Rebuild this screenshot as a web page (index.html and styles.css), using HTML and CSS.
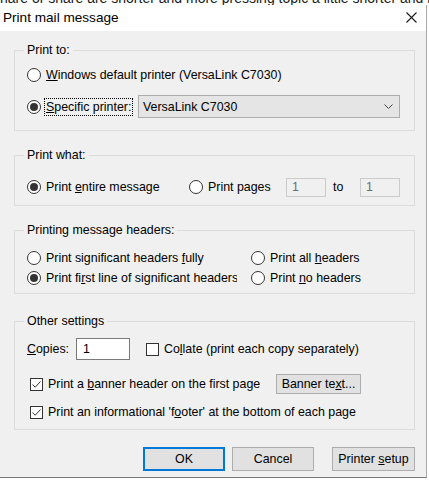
FILE: index.html
```html
<!DOCTYPE html>
<html lang="en">
<head>
  <meta charset="UTF-8">
  <title>Print mail message</title>
  <link rel="stylesheet" href="styles.css">
</head>
<body>
  <!-- Strip of the window behind the dialog -->
  <div class="backdrop">
    <p>hare or share are shorter and more pressing topic a little shorter and more pressing topic</p>
  </div>

  <div class="dialog">
    <div class="titlebar">
      <span class="title">Print mail message</span>
      <svg class="close" width="11" height="11" viewBox="0 0 11 11">
        <path d="M0.5 0.5 L10.5 10.5 M10.5 0.5 L0.5 10.5" stroke="#1a1a1a" stroke-width="1.1" fill="none"/>
      </svg>
    </div>

    <div class="content">
      <!-- Print to -->
      <fieldset class="group group-to">
        <legend>Print to:</legend>
        <div class="row row-default">
          <label class="option"><span class="radio"></span><span><u>W</u>indows default printer (VersaLink C7030)</span></label>
        </div>
        <div class="row row-specific">
          <label class="option opt-specific"><span class="radio checked"></span><span class="focus"><u>S</u>pecific printer:</span></label>
          <div class="select">
            <span>VersaLink C7030</span>
            <svg width="9" height="5" viewBox="0 0 9 5"><path d="M0.5 0.5 L4.5 4.5 L8.5 0.5" stroke="#444" fill="none"/></svg>
          </div>
        </div>
      </fieldset>

      <!-- Print what -->
      <fieldset class="group group-what">
        <legend>Print what:</legend>
        <div class="row row-what">
          <label class="option opt-entire"><span class="radio checked"></span><span>Print <u>e</u>ntire message</span></label>
          <label class="option opt-pages"><span class="radio"></span><span>Print pa<u>g</u>es</span></label>
          <span class="field disabled">1</span>
          <span class="to">to</span>
          <span class="field disabled">1</span>
        </div>
      </fieldset>

      <!-- Headers -->
      <fieldset class="group group-headers">
        <legend>Printing message headers:</legend>
        <div class="row row-headers-1">
          <label class="option col-first"><span class="radio"></span><span>Print significant headers <u>f</u>ully</span></label>
          <label class="option"><span class="radio"></span><span>Print all <u>h</u>eaders</span></label>
        </div>
        <div class="row">
          <label class="option col-first"><span class="radio checked"></span><span>Print fi<u>r</u>st line of significant headers</span></label>
          <label class="option"><span class="radio"></span><span>Print <u>n</u>o headers</span></label>
        </div>
      </fieldset>

      <!-- Other settings -->
      <fieldset class="group group-other">
        <legend>Other settings</legend>
        <div class="row row-copies">
          <span class="copies-label"><u>C</u>opies:</span>
          <span class="field copies">1</span>
          <label class="option opt-collate"><span class="check"></span><span>Co<u>l</u>late (print each copy separately)</span></label>
        </div>
        <div class="row row-banner">
          <label class="option opt-banner">
            <span class="check"><svg width="11" height="11" viewBox="0 0 11 11"><path d="M1.5 5.5 L4.2 8.2 L9.5 2.5" stroke="#333" stroke-width="1" fill="none"/></svg></span>
            <span>Print a <u>b</u>anner header on the first page</span>
          </label>
          <button class="btn btn-banner">Banner te<u>x</u>t...</button>
        </div>
        <div class="row row-footer">
          <label class="option">
            <span class="check"><svg width="11" height="11" viewBox="0 0 11 11"><path d="M1.5 5.5 L4.2 8.2 L9.5 2.5" stroke="#333" stroke-width="1" fill="none"/></svg></span>
            <span>Print an informational 'f<u>o</u>oter' at the bottom of each page</span>
          </label>
        </div>
      </fieldset>

      <div class="actions">
        <button class="btn btn-ok">OK</button>
        <button class="btn">Cancel</button>
        <button class="btn btn-setup">Printer <u>s</u>etup</button>
      </div>
    </div>
  </div>
</body>
</html>
```

FILE: styles.css
```css
/* Colors */
:root {
  --dialog-bg: #f0f0f0;
  --group-border: #dcdcdc;
  --control-border: #333;
  --button-bg: #e1e1e1;
  --button-border: #adadad;
  --accent: #0078d7;
}

body {
  margin: 0;
  background: #fff;
  font-family: "Liberation Sans", Arial, sans-serif;
  font-size: 12.4px;
  color: #000;
  overflow: hidden;
}

u {
  text-underline-offset: 1px;
}

/* Window behind the dialog */
.backdrop {
  height: 5px;
  overflow: hidden;
}

.backdrop p {
  margin: -10px 0 0 0;
  font-size: 14px;
  line-height: 16px;
  white-space: nowrap;
  color: #1a1a1a;
}

/* Dialog frame */
.dialog {
  width: 426px;
  background: var(--dialog-bg);
  border-right: 1px solid #a8a8a8;
  border-bottom: 1px solid #777;
}

.titlebar {
  height: 26px;
  box-sizing: border-box;
  background: #fff;
  display: flex;
  align-items: center;
  justify-content: space-between;
  padding: 0 9px 2px 3px;
}

.title {
  font-size: 13.6px;
}

.content {
  padding: 12px 11px 6px 14px;
}

/* Group boxes */
.group {
  margin: 0;
  padding: 0 12px;
  border: 1px solid var(--group-border);
  min-width: 0;
}

.group legend {
  padding: 0 3px;
  margin-left: -3px;
  line-height: 14px;
}

.group-to {
  padding-bottom: 12px;
}

.group-what {
  margin-top: 17px;
  padding-bottom: 8px;
}

.group-headers {
  margin-top: 17px;
  padding-bottom: 5px;
}

.group-other {
  margin-top: 20px;
  padding-bottom: 7px;
}

/* Rows and options */
.row {
  display: flex;
  align-items: center;
  height: 20px;
  white-space: nowrap;
}

.option {
  display: flex;
  align-items: center;
}

.radio {
  flex: none;
  width: 14px;
  height: 14px;
  box-sizing: border-box;
  border: 1px solid var(--control-border);
  border-radius: 50%;
  background: #fff;
  margin-right: 5px;
  display: flex;
  align-items: center;
  justify-content: center;
}

.radio.checked::after {
  content: "";
  width: 8px;
  height: 8px;
  border-radius: 50%;
  background: #333;
}

.check {
  flex: none;
  width: 13px;
  height: 13px;
  box-sizing: border-box;
  border: 1px solid var(--control-border);
  background: #fff;
  margin-right: 5px;
  display: flex;
}

.focus {
  outline: 1px dotted #000;
  outline-offset: 1px;
}

/* Print to */
.row-default {
  margin-top: 8px;
}

.row-specific {
  margin-top: 10px;
  height: 23px;
}

.opt-specific {
  width: 111px;
}

.select {
  width: 262px;
  height: 23px;
  box-sizing: border-box;
  background: #e5e5e5;
  border: 1px solid var(--button-border);
  display: flex;
  align-items: center;
  justify-content: space-between;
  padding: 0 6px 0 4px;
}

/* Print what */
.row-what {
  margin-top: 15px;
}

.opt-entire {
  width: 162px;
}

.opt-pages {
  width: 97px;
}

.field {
  box-sizing: border-box;
  height: 19px;
  width: 40px;
  padding: 0 5px;
  line-height: 17px;
  border: 1px solid #ccc;
  background: var(--dialog-bg);
}

.field.disabled {
  color: #6d6d6d;
}

.to {
  width: 34px;
  box-sizing: border-box;
  padding-left: 7px;
}

/* Headers */
.row-headers-1 {
  margin-top: 11px;
}

.col-first {
  width: 210px;
  margin-right: 14px;
  overflow: hidden;
}

/* Other settings */
.row-copies {
  margin-top: 10px;
  height: 22px;
}

.copies-label {
  width: 49px;
}

.field.copies {
  width: 54px;
  height: 22px;
  line-height: 20px;
  padding: 0 6px;
  background: #fff;
  border-color: #7a7a7a;
}

.opt-collate {
  margin-left: 16px;
}

.row-banner {
  margin-top: 14px;
  padding-left: 3px;
}

.opt-banner {
  width: 246px;
}

.row-footer {
  margin-top: 8px;
  padding-left: 3px;
}

/* Buttons */
.btn {
  font-family: inherit;
  font-size: 12.4px;
  color: #000;
  background: var(--button-bg);
  border: 1px solid var(--button-border);
  border-radius: 0;
  padding: 0;
  height: 24px;
  width: 82px;
}

.btn-banner {
  width: 85px;
  height: 20px;
}

.actions {
  display: flex;
  justify-content: flex-end;
  gap: 7px;
  margin-top: 17px;
}

.btn-ok {
  border-color: var(--accent);
  box-shadow: inset 0 0 0 1px var(--accent);
}

.btn-setup {
  width: 83px;
  margin-left: 11px;
}
```
